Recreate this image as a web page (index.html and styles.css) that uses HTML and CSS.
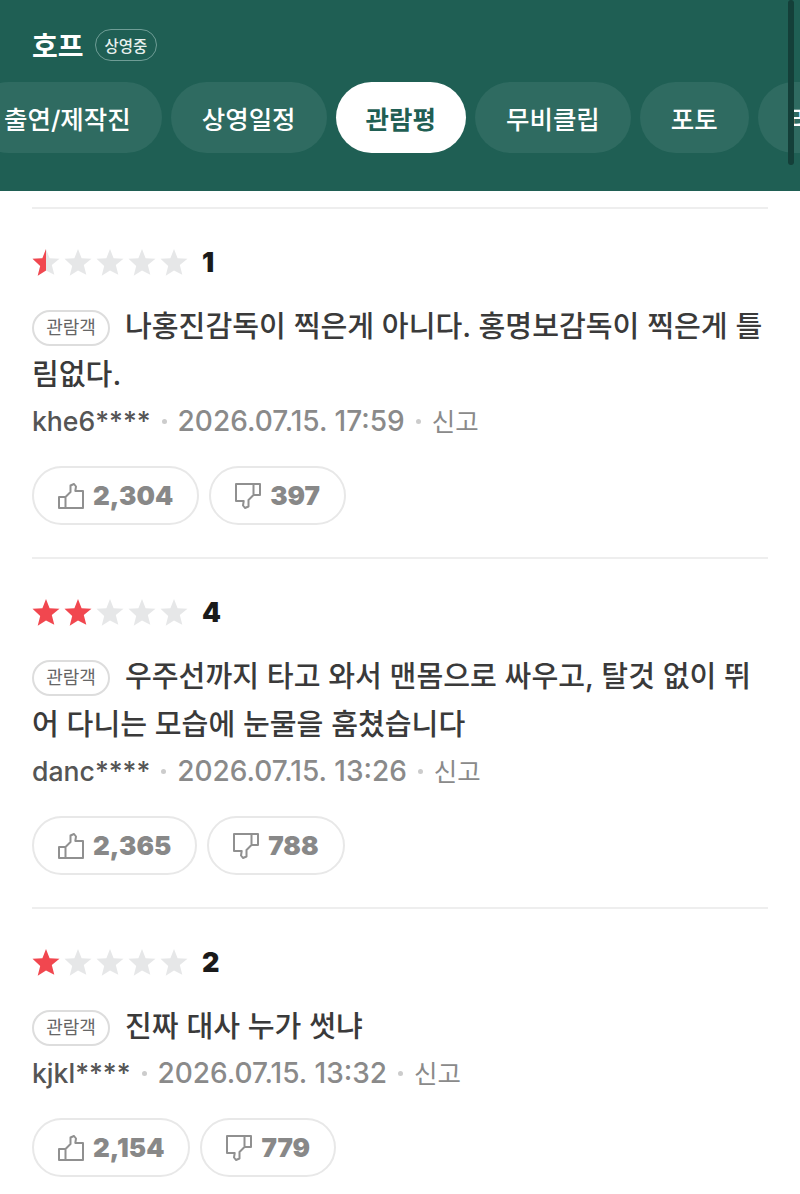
FILE: index.html
```html
<!DOCTYPE html>
<html lang="ko">
<head>
    <meta charset="UTF-8">
    <meta name="viewport" content="width=device-width, initial-scale=1.0">
    <title>호프 - 관람평</title>
    <link rel="stylesheet" href="styles.css">
</head>
<body>
    <svg class="icon-defs" aria-hidden="true">
        <symbol id="star" viewBox="0 0 28 28">
            <path d="M14 1l3.6 9.2 9.9.6-7.7 6.3 2.5 9.6L14 22.4l-8.3 5.3 2.5-9.6L.5 10.800l9.900-.6z"/>
        </symbol>
        <symbol id="thumb" viewBox="0 0 26 26">
            <path d="M1 14h6.500v11H1zM7.500 14l5-5V2.500L16 1l2 2.500-.7 4.500H25v17H7.500" fill="none" stroke="currentColor" stroke-width="2" stroke-linejoin="round"/>
        </symbol>
    </svg>

    <header class="header">
        <div class="title-row">
            <h1 class="movie-title">호프</h1>
            <span class="movie-badge">상영중</span>
        </div>
        <nav class="tabs">
            <a class="tab">출연/제작진</a>
            <a class="tab">상영일정</a>
            <a class="tab tab-active">관람평</a>
            <a class="tab">무비클립</a>
            <a class="tab">포토</a>
            <a class="tab">리뷰</a>
        </nav>
        <div class="scrollbar"></div>
    </header>

    <main class="reviews">
        <article class="review">
            <div class="rating">
                <span class="star star-half"><svg class="star-base"><use href="#star"/></svg><svg class="star-fill"><use href="#star"/></svg></span>
                <span class="star"><svg class="star-base"><use href="#star"/></svg></span>
                <span class="star"><svg class="star-base"><use href="#star"/></svg></span>
                <span class="star"><svg class="star-base"><use href="#star"/></svg></span>
                <span class="star"><svg class="star-base"><use href="#star"/></svg></span>
                <span class="score">1</span>
            </div>
            <p class="comment"><span class="pill">관람객</span>나홍진감독이 찍은게 아니다. 홍명보감독이 찍은게 틀림없다.</p>
            <div class="meta">
                <span class="user">khe6****</span><i class="dot"></i>
                <span>2026.07.15. 17:59</span><i class="dot"></i>
                <span class="report">신고</span>
            </div>
            <div class="votes">
                <button class="vote"><svg class="thumb"><use href="#thumb"/></svg>2,304</button>
                <button class="vote"><svg class="thumb thumb-down"><use href="#thumb"/></svg>397</button>
            </div>
        </article>

        <article class="review">
            <div class="rating">
                <span class="star star-on"><svg class="star-fill"><use href="#star"/></svg></span>
                <span class="star star-on"><svg class="star-fill"><use href="#star"/></svg></span>
                <span class="star"><svg class="star-base"><use href="#star"/></svg></span>
                <span class="star"><svg class="star-base"><use href="#star"/></svg></span>
                <span class="star"><svg class="star-base"><use href="#star"/></svg></span>
                <span class="score">4</span>
            </div>
            <p class="comment"><span class="pill">관람객</span>우주선까지 타고 와서 맨몸으로 싸우고, 탈것 없이 뛰어 다니는 모습에 눈물을 훔쳤습니다</p>
            <div class="meta">
                <span class="user">danc****</span><i class="dot"></i>
                <span>2026.07.15. 13:26</span><i class="dot"></i>
                <span class="report">신고</span>
            </div>
            <div class="votes">
                <button class="vote"><svg class="thumb"><use href="#thumb"/></svg>2,365</button>
                <button class="vote"><svg class="thumb thumb-down"><use href="#thumb"/></svg>788</button>
            </div>
        </article>

        <article class="review">
            <div class="rating">
                <span class="star star-on"><svg class="star-fill"><use href="#star"/></svg></span>
                <span class="star"><svg class="star-base"><use href="#star"/></svg></span>
                <span class="star"><svg class="star-base"><use href="#star"/></svg></span>
                <span class="star"><svg class="star-base"><use href="#star"/></svg></span>
                <span class="star"><svg class="star-base"><use href="#star"/></svg></span>
                <span class="score">2</span>
            </div>
            <p class="comment"><span class="pill">관람객</span>진짜 대사 누가 썻냐</p>
            <div class="meta">
                <span class="user">kjkl****</span><i class="dot"></i>
                <span>2026.07.15. 13:32</span><i class="dot"></i>
                <span class="report">신고</span>
            </div>
            <div class="votes">
                <button class="vote"><svg class="thumb"><use href="#thumb"/></svg>2,154</button>
                <button class="vote"><svg class="thumb thumb-down"><use href="#thumb"/></svg>779</button>
            </div>
        </article>
    </main>
</body>
</html>
```

FILE: styles.css
```css
* {
    margin: 0;
    padding: 0;
    box-sizing: border-box;
}

:root {
    --green: #1f5f54;
    --text: #3a3a3a;
    --grey: #8a8a8a;
    --line: #eeeeee;
}

body {
    font-family: Inter, "Noto Sans CJK KR", sans-serif;
    background: #ffffff;
    color: var(--text);
    overflow-x: hidden;
}

.icon-defs {
    display: none;
}

.header {
    position: relative;
    height: 191px;
    padding-top: 29px;
    background: var(--green);
    overflow: hidden;
}

.title-row {
    display: flex;
    align-items: center;
    gap: 11px;
    height: 32px;
    padding-left: 32px;
}

.movie-title {
    font-size: 28px;
    font-weight: 700;
    color: #ffffff;
}

.movie-badge {
    display: flex;
    align-items: center;
    height: 32px;
    padding: 0 9px;
    border: 1px solid #6f9d96;
    border-radius: 16px;
    font-size: 15.5px;
    font-weight: 500;
    color: #e8f0ee;
}

.tabs {
    display: flex;
    gap: 9px;
    margin-top: 21px;
    margin-left: -27px;
}

.tab {
    flex: none;
    display: flex;
    align-items: center;
    height: 71px;
    padding: 0 31px;
    border-radius: 36px;
    background: #2f6b61;
    font-size: 25.5px;
    font-weight: 500;
    color: #ffffff;
}

.tab-active {
    padding: 0 30px;
    background: #ffffff;
    color: var(--green);
    font-weight: 700;
}

.scrollbar {
    position: absolute;
    top: 0;
    right: 6px;
    width: 6px;
    height: 165px;
    border-radius: 3px;
    background: #143f39;
}

.reviews {
    padding: 16px 32px 0;
}

.review {
    padding: 38px 0 32px;
    border-top: 2px solid var(--line);
}

.review:last-child {
    padding-bottom: 17px;
}

.rating {
    display: flex;
    align-items: center;
    gap: 4px;
    height: 30px;
}

.star {
    position: relative;
    width: 28px;
    height: 28px;
}

.star svg {
    position: absolute;
    top: 0;
    left: 0;
    width: 28px;
    height: 28px;
}

.star-base {
    fill: #e6e7e8;
}

.star-fill {
    fill: #f1474f;
}

.star-half .star-fill {
    clip-path: inset(0 50% 0 0);
}

.score {
    margin-left: 10px;
    font-size: 27px;
    font-weight: 900;
    color: #1a1a1a;
}

.comment {
    margin-top: 26px;
    font-size: 29.15px;
    font-weight: 500;
    line-height: 48px;
}

.pill {
    display: inline-block;
    width: 78px;
    height: 36px;
    margin-right: 15px;
    border: 2px solid #dddddd;
    border-radius: 18px;
    font-size: 18px;
    font-weight: 400;
    line-height: 31px;
    text-align: center;
    color: #666666;
    vertical-align: 3px;
}

.meta {
    display: flex;
    align-items: center;
    gap: 11px;
    height: 28px;
    margin-top: 8px;
    font-size: 28px;
    font-weight: 500;
    color: var(--grey);
}

.user {
    font-size: 26.6px;
    color: #555555;
}

.report {
    margin-bottom: 3px;
    font-size: 25.5px;
    font-weight: 400;
}

.dot {
    width: 5px;
    height: 5px;
    border-radius: 50%;
    background: #cccccc;
}

.votes {
    display: flex;
    gap: 10px;
    margin-top: 31px;
}

.vote {
    display: flex;
    align-items: center;
    gap: 9px;
    height: 59px;
    padding: 0 24px;
    border: 2px solid #e8e8e8;
    border-radius: 30px;
    background: #ffffff;
    font-family: inherit;
    font-size: 26px;
    font-weight: 900;
    color: #888888;
}

.thumb {
    width: 26px;
    height: 26px;
    color: #909090;
}

.thumb-down {
    transform: rotate(180deg);
}
```
